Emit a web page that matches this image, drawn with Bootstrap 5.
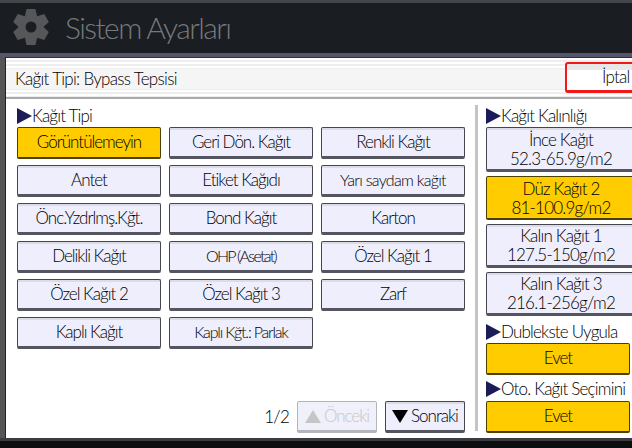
<!DOCTYPE html>
<html lang="en">
<head>
  <meta charset="UTF-8">
  <meta name="viewport" content="width=device-width, initial-scale=1.0">
  <title>Sistem Ayarları</title>
  <link href="https://cdn.jsdelivr.net/npm/bootstrap@5.3.2/dist/css/bootstrap.min.css" rel="stylesheet">
  <style>
    html, body {
      width: 632px;
      height: 448px;
      overflow: hidden;
    }
    body {
      background: #0d0e10;
      font-family: Lato, "Open Sans", sans-serif;
      font-weight: 300;
      font-size: 17px;
      letter-spacing: -0.8px;
      color: #000;
    }
    .top-bar {
      height: 57px;
      background: #1a1d22;
      border-top: 3px solid #45464a;
      border-bottom: 4px solid #55566a;
      padding: 0 0 3px 13px;
      gap: 16px;
    }
    .top-title {
      font-size: 30px;
      line-height: 1;
      color: #77797c;
      font-weight: 300;
      letter-spacing: -1.6px;
      margin: 0;
    }
    .main-wrap {
      height: 384px;
      background: #555558;
      padding-left: 5px;
      border-bottom: 3px solid #3c3c40;
    }
    .main-panel {
      width: 660px;
      background: #fff;
      border-left: 1px solid #222;
      border-top: 1px solid #333;
      flex-shrink: 0;
    }
    .head-row {
      height: 41px;
      padding: 4px 0 5px 0;
      border-bottom: 2px solid #aaa;
      background: repeating-linear-gradient(#fff 0, #fff 2px, #eee 2px, #eee 4px);
    }
    .head-text {
      width: 560px;
      height: 20px;
      margin-top: 7px;
      padding-left: 9px;
      background: #f5f5f5;
      line-height: 20px;
      letter-spacing: -0.7px;
    }
    .cancel-btn {
      width: 100px;
      height: 31px;
      flex-shrink: 0;
      background: linear-gradient(#e8e8e8 0, #e8e8e8 6px, #fff 6px);
      border: 2px solid #f01818;
      border-bottom-width: 3px;
      border-radius: 3px;
      padding: 0 0 0 35px;
      font-size: 17px;
      font-weight: 300;
      letter-spacing: -0.8px;
      line-height: 24px;
      text-align: left;
      color: #000;
    }
    .body-row {
      height: 341px;
    }
    .left-side {
      width: 469px;
      padding: 7px 0 0 11px;
      flex-shrink: 0;
    }
    .right-side {
      padding: 1px 0 0 8px;
      flex-shrink: 0;
      width: 170px;
      border-left: 3px solid #c4c4c4;
      margin: 6px 0 9px 0;
    }
    .sect-label {
      height: 20px;
      line-height: 20px;
      white-space: nowrap;
    }
    .label-duplex {
      margin-top: 6px;
    }
    .label-auto {
      margin-top: 4px;
    }
    .tri-mark {
      width: 15px;
      height: 16px;
      flex-shrink: 0;
    }
    .paper-grid {
      display: grid;
      grid-template-columns: repeat(3, 144px);
      grid-auto-rows: 32px;
      gap: 6px 8px;
      margin-top: 1px;
    }
    .key-btn {
      --bs-btn-padding-x: 0;
      --bs-btn-padding-y: 0;
      --bs-btn-font-size: 17px;
      --bs-btn-font-weight: 300;
      --bs-btn-border-radius: 2px;
      --bs-btn-line-height: 1.2;
      color: #000;
      letter-spacing: -1px;
      background: linear-gradient(#dcdce6 0, #dcdce6 2px, #eeeefd 2px);
      border: 1px solid #454550;
      border-bottom: 3px solid #55555f;
      white-space: nowrap;
    }
    .key-on {
      background: #ffcc00;
      border: 1px solid #4d3f00;
      border-bottom: 2px solid #4d3f00;
    }
    .key-film {
      font-size: 16px;
      letter-spacing: -0.7px;
    }
    .key-ohp {
      font-size: 16px;
      letter-spacing: -1.7px;
    }
    .key-coated {
      font-size: 16px;
      letter-spacing: -1.2px;
    }
    .thick-list {
      width: 150px;
      margin-top: 1px;
      gap: 4px;
    }
    .thick-list .key-btn {
      height: 44px;
      line-height: 19px;
      letter-spacing: -0.8px;
    }
    .thick-list .key-btn:first-child {
      height: 45px;
    }
    .wide-key {
      display: block;
      width: 144px;
      height: 32px;
      margin-top: 1px;
    }
    .wide-last {
      margin-top: 2px;
    }
    .pager-row {
      height: 32px;
      margin-top: 52px;
      gap: 8px;
      width: 448px;
    }
    .pager-btn {
      width: 80px;
      height: 32px;
      gap: 3px;
    }
    .pager-off, .pager-off:disabled {
      color: #c6c6c6;
      background: #f0f0fb;
      border-color: #b4b4bc;
      opacity: 1;
    }
    .gear-icon {
      width: 36px;
      height: 36px;
    }
  </style>
</head>
<body>
  <!-- Title bar -->
  <div class="top-bar d-flex align-items-center">
    <svg class="gear-icon" viewBox="-18 -18 36 36" fill="#555759">
      <circle r="12.5"></circle>
      <g id="tooth"><path d="M-4.5 -18H4.5L6.5 -9H-6.5Z"></path></g>
      <use href="#tooth" transform="rotate(60)"></use>
      <use href="#tooth" transform="rotate(120)"></use>
      <use href="#tooth" transform="rotate(180)"></use>
      <use href="#tooth" transform="rotate(240)"></use>
      <use href="#tooth" transform="rotate(300)"></use>
      <circle r="5.5" fill="#1a1d22"></circle>
    </svg>
    <h1 class="top-title">Sistem Ayarları</h1>
  </div>

  <div class="main-wrap d-flex">
    <div class="main-panel">
      <div class="head-row d-flex">
        <div class="head-text">Kağıt Tipi: Bypass Tepsisi</div>
        <button type="button" class="btn cancel-btn">İptal</button>
      </div>

      <div class="body-row d-flex">
        <!-- Paper types -->
        <div class="left-side">
          <div class="sect-label d-flex align-items-center">
            <svg class="tri-mark" viewBox="0 0 15 16"><path d="M0 0L15 8L0 16Z" fill="#1b1b58"></path></svg>
            <span>Kağıt Tipi</span>
          </div>
          <div class="paper-grid">
            <button type="button" class="btn key-btn key-on">Görüntülemeyin</button>
            <button type="button" class="btn key-btn">Geri Dön. Kağıt</button>
            <button type="button" class="btn key-btn">Renkli Kağıt</button>
            <button type="button" class="btn key-btn">Antet</button>
            <button type="button" class="btn key-btn">Etiket Kağıdı</button>
            <button type="button" class="btn key-btn key-film">Yarı saydam kağıt</button>
            <button type="button" class="btn key-btn">Önc.Yzdrlmş.Kğt.</button>
            <button type="button" class="btn key-btn">Bond Kağıt</button>
            <button type="button" class="btn key-btn">Karton</button>
            <button type="button" class="btn key-btn">Delikli Kağıt</button>
            <button type="button" class="btn key-btn key-ohp">OHP (Asetat)</button>
            <button type="button" class="btn key-btn">Özel Kağıt 1</button>
            <button type="button" class="btn key-btn">Özel Kağıt 2</button>
            <button type="button" class="btn key-btn">Özel Kağıt 3</button>
            <button type="button" class="btn key-btn">Zarf</button>
            <button type="button" class="btn key-btn">Kaplı Kağıt</button>
            <button type="button" class="btn key-btn key-coated">Kaplı Kğt.: Parlak</button>
          </div>
          <div class="pager-row d-flex align-items-center justify-content-end">
            <span>1/2</span>
            <button type="button" class="btn key-btn pager-btn pager-off d-flex align-items-center justify-content-center" disabled>
              <svg width="16" height="13" viewBox="0 0 16 13"><path d="M8 0L16 13H0Z" fill="#c6c6c6"></path></svg>
              <span>Önceki</span>
            </button>
            <button type="button" class="btn key-btn pager-btn d-flex align-items-center justify-content-center">
              <svg width="16" height="13" viewBox="0 0 16 13"><path d="M0 0H16L8 13Z" fill="#000"></path></svg>
              <span>Sonraki</span>
            </button>
          </div>
        </div>

        <!-- Thickness and options -->
        <div class="right-side">
          <div class="sect-label d-flex align-items-center">
            <svg class="tri-mark" viewBox="0 0 15 16"><path d="M0 0L15 8L0 16Z" fill="#1b1b58"></path></svg>
            <span>Kağıt Kalınlığı</span>
          </div>
          <div class="thick-list d-flex flex-column">
            <button type="button" class="btn key-btn">İnce Kağıt<br>52.3-65.9g/m2</button>
            <button type="button" class="btn key-btn key-on">Düz Kağıt 2<br>81-100.9g/m2</button>
            <button type="button" class="btn key-btn">Kalın Kağıt 1<br>127.5-150g/m2</button>
            <button type="button" class="btn key-btn">Kalın Kağıt 3<br>216.1-256g/m2</button>
          </div>
          <div class="sect-label label-duplex d-flex align-items-center">
            <svg class="tri-mark" viewBox="0 0 15 16"><path d="M0 0L15 8L0 16Z" fill="#1b1b58"></path></svg>
            <span>Dublekste Uygula</span>
          </div>
          <button type="button" class="btn key-btn key-on wide-key">Evet</button>
          <div class="sect-label label-auto d-flex align-items-center">
            <svg class="tri-mark" viewBox="0 0 15 16"><path d="M0 0L15 8L0 16Z" fill="#1b1b58"></path></svg>
            <span>Oto. Kağıt Seçimini</span>
          </div>
          <button type="button" class="btn key-btn key-on wide-key wide-last">Evet</button>
        </div>
      </div>
    </div>
  </div>
  <script src="https://cdn.jsdelivr.net/npm/bootstrap@5.3.2/dist/js/bootstrap.bundle.min.js"></script>
</body>
</html>
